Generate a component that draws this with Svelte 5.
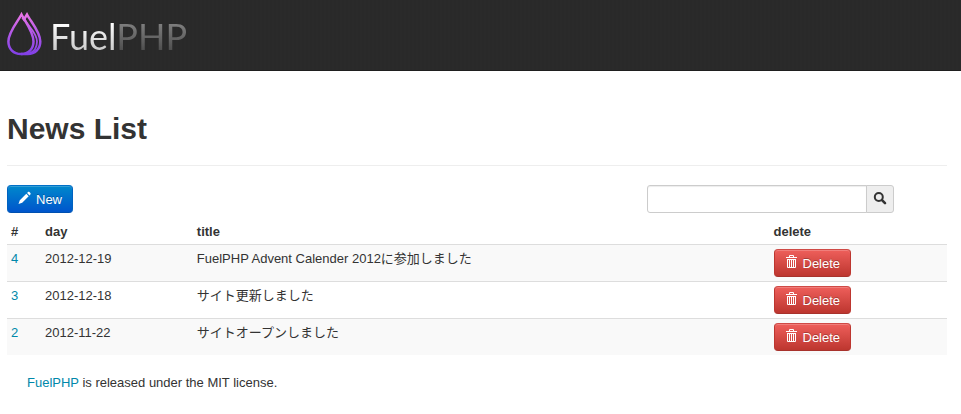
<script>
  const items = [
    { id: 4, day: '2012-12-19', title: 'FuelPHP Advent Calender 2012に参加しました' },
    { id: 3, day: '2012-12-18', title: 'サイト更新しました' },
    { id: 2, day: '2012-11-22', title: 'サイトオープンしました' }
  ];
  let query = $state('');
</script>

<header class="banner">
  <a class="brand" href="#home">
    <svg class="drops" viewBox="0 0 36 46" aria-hidden="true">
      <defs>
        <linearGradient id="flame" x1="0" y1="0" x2="0" y2="46" gradientUnits="userSpaceOnUse">
          <stop offset="0" stop-color="#f57be6" />
          <stop offset="0.45" stop-color="#b85be8" />
          <stop offset="1" stop-color="#7d3ee6" />
        </linearGradient>
      </defs>
      <g fill="none" stroke="url(#flame)" stroke-width="2.5" stroke-linejoin="miter">
        <path d="M14.500 4.500C10.500 12 1.400 22 1.400 31.500C1.400 39 6.500 44 14 44S26.500 39 26.500 31.500C26.500 22 18.500 12 14.500 4.500Z" />
        <path d="M15.500 7.500L17 9.500L20 4.500C24 12 33.300 22 33.300 31.500C33.300 39 28 44 20.500 44H14" />
        <path d="M17 8.500C21 16.500 30 22.500 30 31.500C30 38 26.500 42 22 43.500" stroke-width="1.800" />
      </g>
    </svg>
    <span class="name"><span class="fuel">Fuel</span><span class="php">PHP</span></span>
  </a>
</header>

<main>
  <h1>News List</h1>

  <div class="toolbar">
    <button type="button" class="btn primary">
      <svg viewBox="0 0 14 14" aria-hidden="true">
        <path fill="#fff" d="M0.500 13L1.800 9.300L8.300 2.800L10.700 5.200L4.200 11.700ZM9.100 2L10 1.100C10.500 0.700 11 0.700 11.400 1.100L12.400 2.100C12.800 2.500 12.800 3.100 12.400 3.500L11.500 4.400Z" />
      </svg>
      New
    </button>
    <form class="search" onsubmit={(e) => e.preventDefault()}>
      <input type="text" aria-label="Search news" bind:value={query} />
      <button type="submit" aria-label="Search">
        <svg viewBox="0 0 14 14" aria-hidden="true">
          <circle cx="5.800" cy="5" r="4" fill="none" stroke="#333" stroke-width="2" />
          <path d="M9 8.200L12 11.200" stroke="#333" stroke-width="2.600" stroke-linecap="round" />
        </svg>
      </button>
    </form>
  </div>

  <table>
    <thead>
      <tr>
        <th class="num">#</th>
        <th class="day">day</th>
        <th class="title">title</th>
        <th>delete</th>
      </tr>
    </thead>
    <tbody>
      {#each items as item (item.id)}
        <tr>
          <td><a href="#news-{item.id}">{item.id}</a></td>
          <td>{item.day}</td>
          <td>{item.title}</td>
          <td class="action">
            <button type="button" class="btn danger">
              <svg viewBox="0 0 14 14" aria-hidden="true">
                <g fill="none" stroke="#fff">
                  <path d="M4.500 2V0.500H8.500V2" />
                  <path d="M1 2.500H12" />
                  <path d="M2.500 4V12.500H10.500V4" />
                  <path d="M4.500 4V12M6.500 4V12M8.500 4V12" />
                  <path d="M2 4.500H11" />
                </g>
              </svg>
              Delete
            </button>
          </td>
        </tr>
      {/each}
    </tbody>
  </table>

  <footer><a href="#fuelphp">FuelPHP</a> is released under the MIT license.</footer>
</main>

<style>
  :global(body) {
    margin: 0;
    background: #fff;
    color: #333;
    font: 13px/18px 'Liberation Sans', Arial, 'Noto Sans CJK JP', sans-serif;
  }
  a {
    color: #0088aa;
    text-decoration: none;
  }
  a:hover {
    text-decoration: underline;
  }
  .banner {
    box-sizing: border-box;
    height: 71px;
    padding: 10px 7px;
    border-bottom: 1px solid #1f1f1f;
    background: repeating-linear-gradient(90deg, #2a2a2a 0 2px, #292929 2px 4px);
  }
  .brand {
    display: inline-flex;
    gap: 7px;
  }
  .drops {
    width: 36px;
    height: 46px;
  }
  .name {
    font: 36px/52px Lato, sans-serif;
  }
  .fuel,
  .php {
    color: transparent;
    background-clip: text;
    -webkit-background-clip: text;
  }
  .fuel {
    background-image: linear-gradient(#fff 20%, #c8c8c8 85%);
  }
  .php {
    background-image: linear-gradient(#808080 20%, #4c4c4c 85%);
  }
  main {
    padding: 40px 14px 20px 7px;
  }
  h1 {
    margin: 0 0 19px;
    padding-bottom: 18px;
    border-bottom: 1px solid #eee;
    font-size: 30px;
    line-height: 36px;
  }
  .toolbar {
    display: flex;
    justify-content: space-between;
    margin: 0 53px 5px 0;
  }
  .btn {
    display: inline-flex;
    align-items: center;
    gap: 4px;
    box-sizing: border-box;
    height: 28px;
    padding: 1px 10px 0;
    border: 1px solid;
    border-radius: 4px;
    color: #fff;
    font: inherit;
    text-shadow: 0 -1px 0 rgba(0, 0, 0, 0.25);
    box-shadow: inset 0 1px 0 rgba(255, 255, 255, 0.2);
    cursor: pointer;
  }
  .btn svg,
  .search svg {
    width: 14px;
    height: 14px;
  }
  .btn svg {
    margin-bottom: 3px;
  }
  .primary {
    border-color: #0070c8 #0062c0 #0050b0;
    background: linear-gradient(#0088cc, #0055cc);
  }
  .danger {
    border-color: #cf4a46 #bd362f #a8322c;
    background: linear-gradient(#ee5f5b, #bd362f);
  }
  .search {
    display: flex;
  }
  .search input {
    box-sizing: border-box;
    width: 220px;
    height: 28px;
    padding: 4px;
    border: 1px solid #ccc;
    border-radius: 3px 0 0 3px;
    box-shadow: inset 0 1px 1px rgba(0, 0, 0, 0.075);
    font: inherit;
  }
  .search button {
    display: flex;
    align-items: center;
    justify-content: center;
    box-sizing: border-box;
    width: 28px;
    height: 28px;
    margin-left: -1px;
    padding: 0;
    border: 1px solid #ccc;
    border-radius: 0 3px 3px 0;
    background: #eee;
  }
  table {
    width: 100%;
    table-layout: fixed;
    border-spacing: 0;
    border-collapse: separate;
  }
  th,
  td {
    padding: 5px 4px 3px;
    text-align: left;
    vertical-align: top;
  }
  .num {
    width: 26px;
  }
  .day {
    width: 15.3%;
  }
  .title {
    width: 60.5%;
  }
  td {
    border-top: 1px solid #ddd;
  }
  .action {
    padding: 4px;
  }
  .action .btn {
    display: flex;
  }
  tbody tr:nth-child(odd) td {
    background: #f9f9f9;
  }
  footer {
    padding: 19px 20px 0;
  }
</style>
